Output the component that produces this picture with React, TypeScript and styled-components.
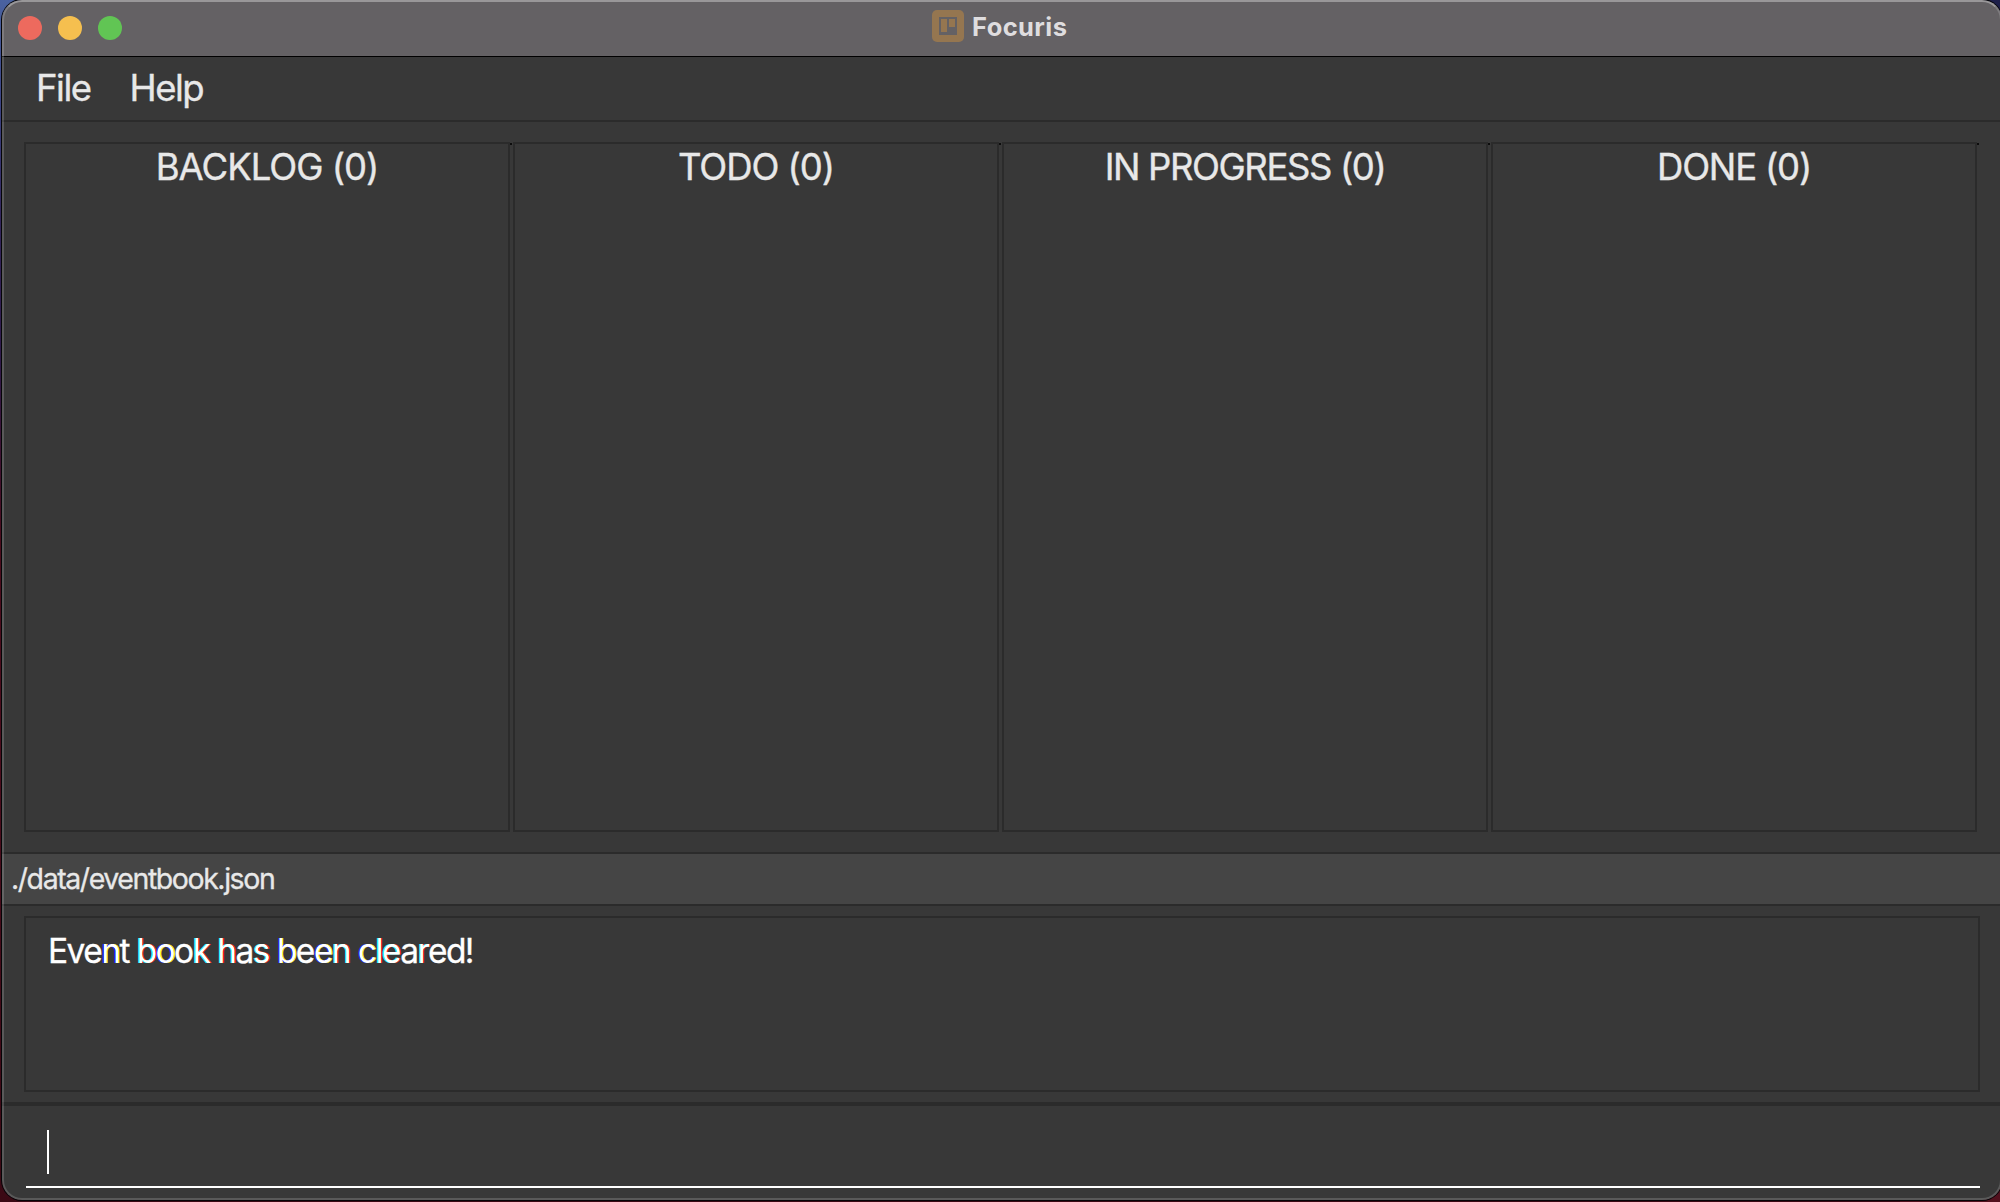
import React from "react";
import styled, { createGlobalStyle } from "styled-components";

const Global = createGlobalStyle`
  * { box-sizing: border-box; }
  html, body { margin: 0; overflow: hidden; background: #3b0914; }
  body { font-family: Inter, "Liberation Sans", sans-serif; }
`;

const Desktop = styled.div`
  width: 2000px;
  height: 1202px;
  padding-left: 2px;
  overflow: hidden;
  background:
    linear-gradient(#1e1f4a, #1e1f4a) 1900px 0 / 100px 60px no-repeat,
    linear-gradient(#52101d, #52101d) 1900px 1140px / 100px 62px no-repeat,
    linear-gradient(180deg, #4a62a0 0, #3d4686 8%, #33265c 18%, #2f1a4a 30%, #4b0c1c 45%, #4b0c1c 65%, #3b0914 100%);
`;

const Shadow = styled.div`
  width: 2000px;
  height: 1200px;
  border-radius: 20px;
  box-shadow: 0 0 0 1px #050508;
`;

const Window = styled.div`
  position: relative;
  display: flex;
  flex-direction: column;
  width: 2000px;
  height: 1200px;
  border-radius: 20px;
  overflow: hidden;
  background: #383838;
`;

const Rim = styled.div`
  position: absolute;
  inset: 0;
  border: 2px solid rgba(255, 255, 255, 0.17);
  border-top-color: rgba(255, 255, 255, 0.34);
  border-radius: 20px;
  pointer-events: none;
`;

const TitleBar = styled.header`
  display: flex;
  align-items: center;
  flex: none;
  height: 57px;
  padding: 0 16px 1px;
  background: #646164;
  border-bottom: 1px solid #000;
`;

const Lights = styled.div`
  display: flex;
  gap: 16px;
`;

const Light = styled.span<{ $color: string }>`
  width: 24px;
  height: 24px;
  border-radius: 50%;
  background: ${(p) => p.$color};
`;

const Title = styled.div`
  display: flex;
  flex: 1;
  align-items: center;
  gap: 8px;
  padding-left: 810px;
  padding-bottom: 3px;
  color: #dfdddf;
  font-size: 25.5px;
  font-weight: 700;
  line-height: 32px;
  letter-spacing: 0.4px;
`;

const TitleText = styled.span`
  padding-top: 1px;
`;

const MenuBar = styled.nav`
  display: flex;
  flex: none;
  height: 65px;
  padding: 0 34px;
  gap: 39px;
  border-bottom: 2px solid #2b2b2b;
  color: #e8e8e8;
  font-size: 36.5px;
  line-height: 62px;
  letter-spacing: -1.5px;
  -webkit-text-stroke: 0.35px #e8e8e8;
`;

const Board = styled.main`
  display: grid;
  flex: none;
  grid-template-columns: repeat(4, 486px);
  column-gap: 3px;
  height: 730px;
  padding: 20px 22px;
`;

const Column = styled.section`
  position: relative;
  border: 2px solid #2b2b2b;
  text-align: center;

  &::after {
    content: "";
    position: absolute;
    top: -1px;
    right: -4px;
    width: 2px;
    height: 2px;
    background: #0c0c0c;
  }
`;

const Heading = styled.h2<{ $tracking: number }>`
  margin: 0;
  color: #e8e8e8;
  font-size: 36.5px;
  font-weight: 400;
  line-height: 46px;
  letter-spacing: ${(p) => p.$tracking}px;
  -webkit-text-stroke: 0.35px #e8e8e8;
`;

const StatusBar = styled.div`
  flex: none;
  height: 54px;
  padding-left: 9px;
  border: solid #2b2b2b;
  border-width: 2px 0;
  background: #454545;
  color: #e8e8e8;
  font-size: 28.5px;
  line-height: 50px;
  letter-spacing: -1.43px;
  -webkit-text-stroke: 0.3px #e8e8e8;
`;

const ResultPane = styled.div`
  flex: none;
  height: 196px;
  padding: 10px 22px;
`;

const Result = styled.div`
  width: 1956px;
  height: 176px;
  padding: 10px 22px;
  border: 2px solid #2b2b2b;
  color: #fff;
  font-size: 33.5px;
  line-height: 46px;
  letter-spacing: -1.57px;
  -webkit-text-stroke: 0.3px #fff;
`;

const Fringe = styled.span<{ $left: string; $right: string }>`
  -webkit-text-stroke: 0;
  text-shadow: -0.8px 0 ${(p) => p.$left}, 0.8px 0 ${(p) => p.$right};
`;

const CommandPane = styled.div`
  flex: none;
  height: 98px;
  padding: 0 22px 0 24px;
  border-top: 4px solid #2b2b2b;
`;

const CommandField = styled.div`
  display: flex;
  width: 1954px;
  height: 82px;
  padding: 24px 21px 0;
  border-bottom: 2px solid #fff;
`;

const Caret = styled.span`
  width: 2px;
  height: 44px;
  background: #fff;
`;

const BoardIcon = () => (
  <svg width="32" height="32" viewBox="0 0 32 32">
    <rect width="32" height="32" rx="5" fill="#957650" />
    <path fill="#646164" fillRule="evenodd" d="M7 7h18v18H7zM9 9v13h6V9zM17 9v8h6V9z" />
  </svg>
);

const columns = [
  { name: "BACKLOG", tracking: -1 },
  { name: "TODO", tracking: -1.05 },
  { name: "IN PROGRESS", tracking: -1.4 },
  { name: "DONE", tracking: -1.2 },
];

const warm = { $left: "#00ffff", $right: "#ff0000" };
const cool = { $left: "#0000ff", $right: "#ffff00" };

export default function App() {
  return (
    <>
      <Global />
      <Desktop>
        <Shadow>
          <Window>
            <TitleBar>
              <Lights>
                <Light $color="#ed6a5e" />
                <Light $color="#f5bf4f" />
                <Light $color="#61c554" />
              </Lights>
              <Title>
                <BoardIcon />
                <TitleText>Focuris</TitleText>
              </Title>
            </TitleBar>
            <MenuBar>
              <span>File</span>
              <span>Help</span>
            </MenuBar>
            <Board>
              {columns.map((c) => (
                <Column key={c.name}>
                  <Heading $tracking={c.tracking}>{c.name} (0)</Heading>
                </Column>
              ))}
            </Board>
            <StatusBar>./data/eventbook.json</StatusBar>
            <ResultPane>
              <Result>
                Eve<Fringe {...cool}>n</Fringe>t <Fringe {...warm}>b</Fringe>
                <Fringe {...cool}>o</Fringe>o<Fringe {...warm}>k</Fringe>{" "}
                <Fringe {...warm}>h</Fringe>a<Fringe {...warm}>s</Fringe>{" "}
                <Fringe {...cool}>b</Fringe>e<Fringe {...cool}>e</Fringe>
                <Fringe {...warm}>n</Fringe> <Fringe {...cool}>c</Fringe>
                <Fringe {...warm}>le</Fringe>a<Fringe {...warm}>r</Fringe>ed!
              </Result>
            </ResultPane>
            <CommandPane>
              <CommandField>
                <Caret />
              </CommandField>
            </CommandPane>
            <Rim />
          </Window>
        </Shadow>
      </Desktop>
    </>
  );
}
